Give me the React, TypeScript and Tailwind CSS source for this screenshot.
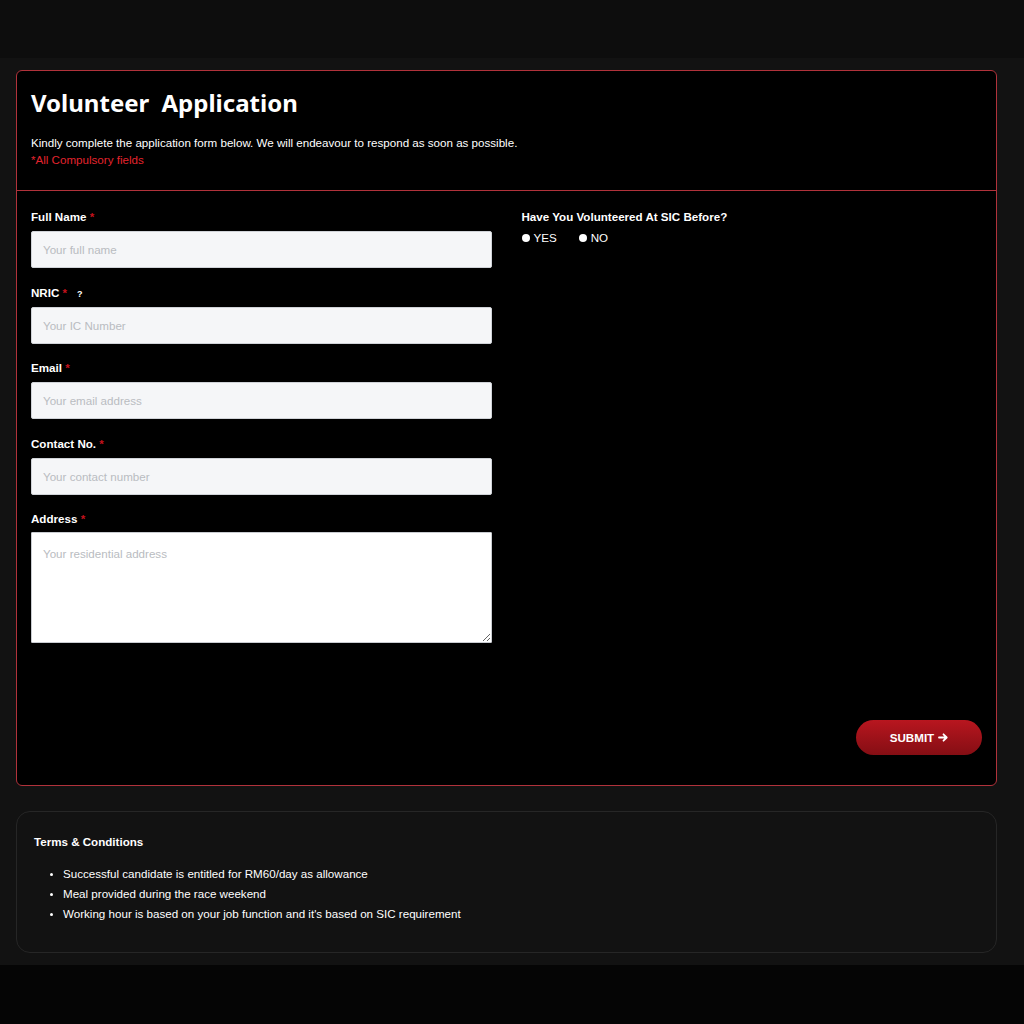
import React from 'react';

const labelCls = 'block h-[16px] text-[11.6px] leading-[16px] font-bold text-white mb-[6px] whitespace-nowrap';
const inputCls =
  'block w-full h-[37px] px-[11px] text-[11.6px] bg-[#f5f6f8] border border-[#d0d3d8] rounded-[2px] text-gray-800 placeholder:text-[#b9bcc1] outline-none';

function Field({ label, placeholder, extra }: { label: string; placeholder: string; extra?: React.ReactNode }) {
  return (
    <div className="mb-[16.5px]">
      <label className={labelCls}>
        {label} <span className="text-[#c4121d]">*</span>
        {extra}
      </label>
      <input className={inputCls} placeholder={placeholder} />
    </div>
  );
}

export default function App() {
  const terms = [
    'Successful candidate is entitled for RM60/day as allowance',
    'Meal provided during the race weekend',
    "Working hour is based on your job function and it's based on SIC requirement",
  ];

  return (
    <div className="min-h-[1024px] flex flex-col bg-[#050505]" style={{ fontFamily: '"Liberation Sans", Arial, sans-serif' }}>
      {/* top bar */}
      <div className="h-[58px] bg-[#0d0d0d]" />

      <main className="bg-[#121212] pl-4 pr-[27px] pt-3 pb-3">
        {/* form card */}
        <div className="bg-black border border-[#b1323b] rounded-[6px]">
          <div className="px-[14px] pt-[16px] pb-[22px] border-b border-[#b1323b]">
            <h1
              className="text-[24px] leading-[32px] font-bold text-white [word-spacing:6px]"
              style={{ fontFamily: '"Noto Sans", sans-serif' }}
            >
              Volunteer Application
            </h1>
            <p className="mt-[15px] text-[11.6px] leading-[17px] text-white">
              Kindly complete the application form below. We will endeavour to respond as soon as possible.
            </p>
            <p className="text-[11.6px] leading-[17px] text-[#e3242e]">*All Compulsory fields</p>
          </div>

          <form className="px-[14px] pt-[18px] pb-[30px]" onSubmit={e => e.preventDefault()}>
            <div className="grid grid-cols-2 gap-[30px]">
              <div>
                <Field label="Full Name" placeholder="Your full name" />
                <Field
                  label="NRIC"
                  placeholder="Your IC Number"
                  extra={<span className="ml-[10px] text-[9px] leading-[16px] font-bold text-white">?</span>}
                />
                <Field label="Email" placeholder="Your email address" />
                <Field label="Contact No." placeholder="Your contact number" />
                <div>
                  <label className="block h-[16px] text-[11.6px] leading-[16px] font-bold text-white mb-[5px]">
                    Address <span className="text-[#c4121d]">*</span>
                  </label>
                  <textarea
                    className="block w-full h-[111px] px-[11px] py-[12px] text-[11.6px] bg-white border border-[#c9ccd1] rounded-[1px] placeholder:text-[#b9bcc1] outline-none"
                    placeholder="Your residential address"
                  />
                </div>
              </div>

              <div>
                <div className="h-[16px] text-[11.6px] leading-[16px] font-bold text-white mb-[5px]">
                  Have You Volunteered At SIC Before?
                </div>
                <div className="flex items-center gap-[22px] text-[11.6px] leading-[16px] text-white">
                  <label className="flex items-center gap-[4px]">
                    <span className="w-[8px] h-[8px] rounded-full bg-white" />
                    YES
                  </label>
                  <label className="flex items-center gap-[4px]">
                    <span className="w-[8px] h-[8px] rounded-full bg-white" />
                    NO
                  </label>
                </div>
              </div>
            </div>

            <div className="flex justify-end mt-[77px]">
              <button
                type="submit"
                className="flex items-center justify-center gap-[4px] w-[126px] h-[35px] rounded-full bg-gradient-to-b from-[#b8161f] to-[#850e14] text-white text-[11.6px] font-bold"
              >
                SUBMIT
                <svg width="10" height="9" viewBox="0 0 10 9" fill="none" stroke="white" strokeWidth="1.8" strokeLinecap="round" strokeLinejoin="round">
                  <path d="M1 4.5h7.5M5.5 1.3l3.2 3.2-3.2 3.2" />
                </svg>
              </button>
            </div>
          </form>
        </div>

        {/* terms */}
        <div className="mt-[25px] bg-[#121212] border border-[#262626] rounded-[14px] px-[17px] pt-[22px] pb-[28px]">
          <h2 className="text-[11.6px] leading-[16px] font-bold text-white">Terms &amp; Conditions</h2>
          <ul className="mt-[14px] pl-[29px] list-disc text-[11.6px] leading-[20px] text-white marker:text-[10px]">
            {terms.map(t => (
              <li key={t}>{t}</li>
            ))}
          </ul>
        </div>
      </main>

      <div className="flex-1 bg-[#050505]" />
    </div>
  );
}
